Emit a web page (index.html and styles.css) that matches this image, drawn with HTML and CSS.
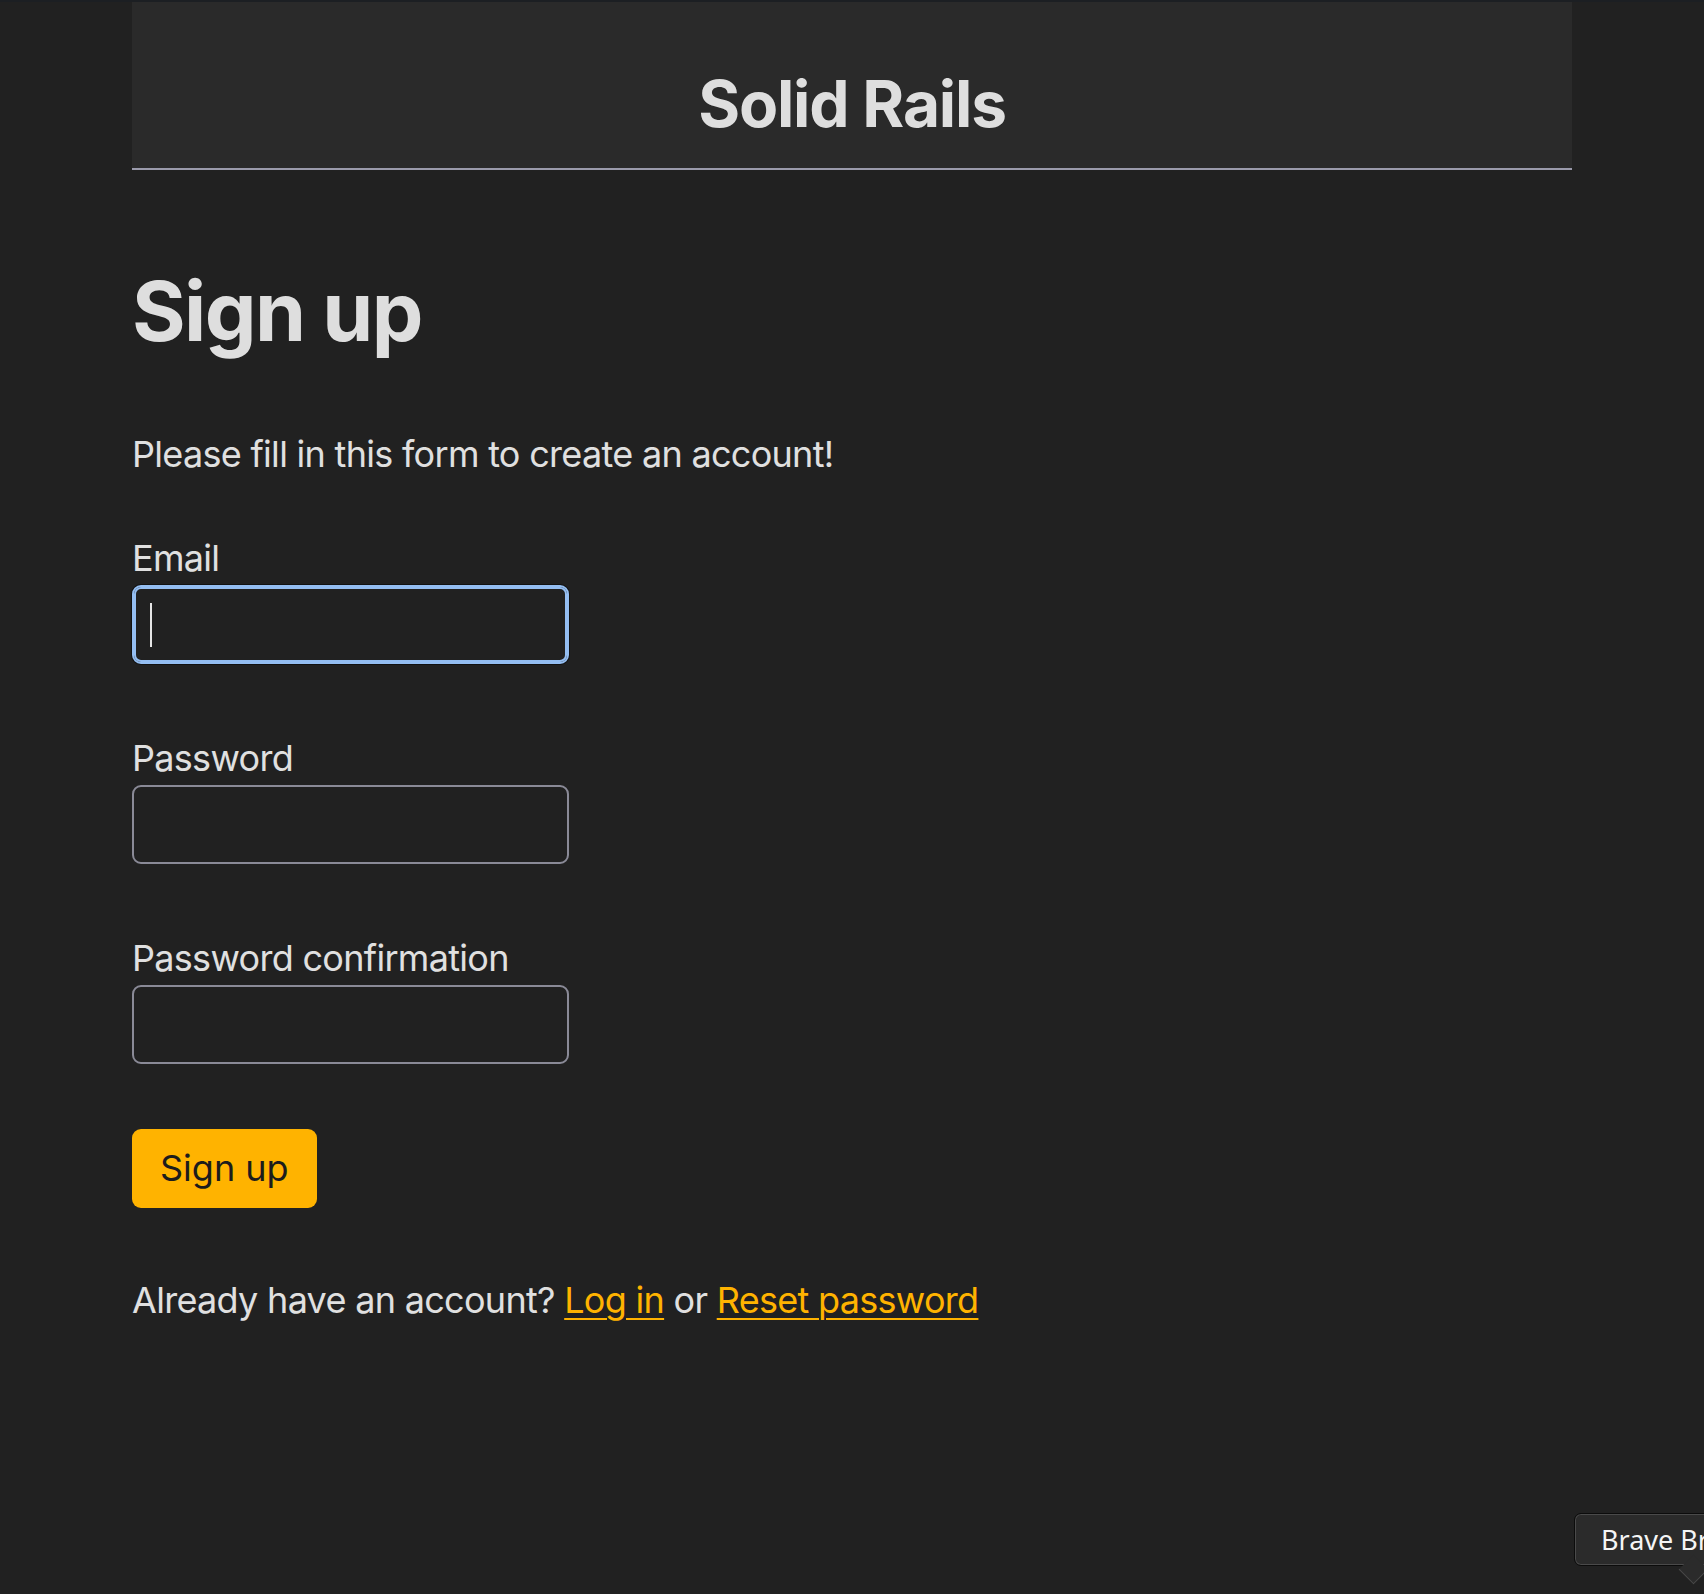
FILE: index.html
```html
<!DOCTYPE html>
<html lang="en">
<head>
<meta charset="utf-8">
<title>Sign up · Solid Rails</title>
<link rel="stylesheet" href="styles.css">
</head>
<body>
<div class="topline"></div>
<div class="container">
  <header class="site-header">
    <h2 class="brand">Solid Rails</h2>
  </header>
  <main class="main">
    <h1 class="page-title">Sign up</h1>
    <p class="intro">Please fill in this form to create an account!</p>
    <form class="form">
      <div class="field">
        <label class="label" for="email">Email</label>
        <div class="input-wrap">
          <input class="input input-focus" id="email" type="email">
          <span class="caret"></span>
        </div>
      </div>
      <div class="field">
        <label class="label" for="password">Password</label>
        <input class="input" id="password" type="password">
      </div>
      <div class="field">
        <label class="label" for="password_confirmation">Password confirmation</label>
        <input class="input" id="password_confirmation" type="password">
      </div>
      <div class="actions">
        <button class="btn" type="button">Sign up</button>
      </div>
    </form>
    <p class="alt">Already have an account? <a href="#" class="link">Log in</a> or <a href="#" class="link">Reset password</a></p>
  </main>
</div>
<div class="tooltip">Brave Browser</div>
</body>
</html>
```

FILE: styles.css
```css
html, body {
  margin: 0;
  padding: 0;
  height: 100%;
  overflow: hidden;
}
body {
  background: #212121;
  color: #e0e0e0;
  font-family: Inter, "Noto Sans", "Liberation Sans", sans-serif;
  font-size: 36px;
  line-height: 54px;
  letter-spacing: -0.7px;
}
.topline {
  height: 2px;
  background: #1c1f23;
}
.container {
  width: 1440px;
  margin: 0 auto;
}
.site-header {
  background: #2a2a2a;
  border-bottom: 2px solid #9a9aab;
  height: 166px;
  box-sizing: content-box;
}
.brand {
  margin: 0;
  padding-top: 63px;
  text-align: center;
  font-size: 64px;
  line-height: 77px;
  font-weight: 700;
  color: #dedede;
  letter-spacing: -1.2px;
}
.main {
  padding-top: 94px;
}
.page-title {
  margin: 0;
  font-size: 82px;
  line-height: 96px;
  font-weight: 700;
  color: #dedede;
  letter-spacing: -1.6px;
}
.intro {
  margin: 67px 0 0;
}
.form {
  margin-top: 50px;
  display: flex;
  flex-direction: column;
  gap: 67px;
}
.field {
  display: flex;
  flex-direction: column;
}
.label {
  display: block;
}
.input-wrap {
  position: relative;
  width: 437px;
}
.input {
  box-sizing: border-box;
  width: 437px;
  height: 79px;
  background: #212121;
  border: 2px solid #8a8a97;
  border-radius: 9px;
  color: #e0e0e0;
  font: inherit;
  padding: 0 16px;
  outline: none;
  margin: 0;
}
.input-focus {
  border-color: #94bef2;
  box-shadow: inset 0 0 0 2px #94bef2, 0 0 0 1px #121212;
}
.caret {
  position: absolute;
  left: 18px;
  top: 18px;
  width: 2px;
  height: 44px;
  background: #e6e6e6;
}
.actions {
  display: flex;
  margin-top: -2px;
}
.btn {
  height: 79px;
  padding: 0 28px;
  background: #ffb300;
  color: #1c1c1c;
  border: none;
  border-radius: 9px;
  font: inherit;
  line-height: 79px;
  cursor: pointer;
}
.alt {
  margin: 65px 0 0;
}
.link {
  color: #ffb300;
  text-decoration: underline;
  text-underline-offset: 5px;
  text-decoration-thickness: 2px;
}
.tooltip {
  position: fixed;
  left: 1574px;
  top: 1513px;
  height: 53px;
  box-sizing: border-box;
  padding: 0 26px;
  background: #2b2b2b;
  border: 1px solid #0c0c0c;
  box-shadow: inset 0 0 0 1px #4a4a4a;
  border-radius: 7px;
  color: #f5f5f5;
  font-family: "Noto Sans", "Liberation Sans", sans-serif;
  font-size: 27px;
  line-height: 51px;
  letter-spacing: 0;
  white-space: nowrap;
}
.tooltip::after {
  content: "";
  position: absolute;
  left: 108px;
  bottom: -15px;
  width: 20px;
  height: 20px;
  background: #2b2b2b;
  border-right: 1px solid #4a4a4a;
  border-bottom: 1px solid #4a4a4a;
  transform: rotate(45deg);
}
```
